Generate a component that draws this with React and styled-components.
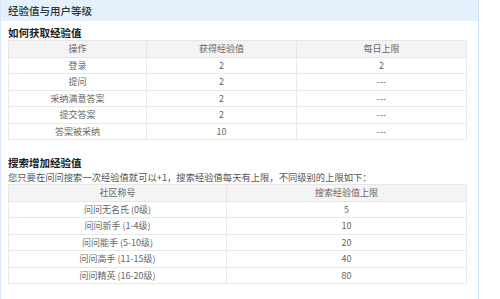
import React from 'react'
import styled, { createGlobalStyle } from 'styled-components'

const GlobalStyle = createGlobalStyle`
  html, body {
    margin: 0;
    padding: 0;
    background: #fff;
  }
  body {
    font-family: "Noto Sans CJK SC", "Noto Sans", sans-serif;
  }
`

const gainRows = [
  { action: '登录', value: '2', limit: '2' },
  { action: '提问', value: '2', limit: '---' },
  { action: '采纳满意答案', value: '2', limit: '---' },
  { action: '提交答案', value: '2', limit: '---' },
  { action: '答案被采纳', value: '10', limit: '---' },
]

const levelRows = [
  { title: '问问无名氏 (0级)', limit: '5' },
  { title: '问问新手 (1-4级)', limit: '10' },
  { title: '问问能手 (5-10级)', limit: '20' },
  { title: '问问高手 (11-15级)', limit: '40' },
  { title: '问问精英 (16-20级)', limit: '80' },
]

const App = () => {
  return (
    <>
      <GlobalStyle />
      <Panel>
        <PanelHeader>经验值与用户等级</PanelHeader>
        <PanelBody>
          <SectionTitle>如何获取经验值</SectionTitle>
          <Table>
            <colgroup>
              <col style={{ width: 138 }} />
              <col style={{ width: 150 }} />
              <col />
            </colgroup>
            <thead>
              <tr>
                <Th>操作</Th>
                <Th>获得经验值</Th>
                <Th>每日上限</Th>
              </tr>
            </thead>
            <tbody>
              {gainRows.map((r) => (
                <tr key={r.action}>
                  <Td>{r.action}</Td>
                  <Td>{r.value}</Td>
                  <Td>{r.limit}</Td>
                </tr>
              ))}
            </tbody>
          </Table>

          <SectionTitle $gap>搜索增加经验值</SectionTitle>
          <Note>您只要在问问搜索一次经验值就可以+1，搜索经验值每天有上限，不同级别的上限如下：</Note>
          <Table>
            <colgroup>
              <col style={{ width: 218 }} />
              <col />
            </colgroup>
            <thead>
              <tr>
                <Th>社区称号</Th>
                <Th>搜索经验值上限</Th>
              </tr>
            </thead>
            <tbody>
              {levelRows.map((r) => (
                <tr key={r.title}>
                  <Td>{r.title}</Td>
                  <Td>{r.limit}</Td>
                </tr>
              ))}
            </tbody>
          </Table>
        </PanelBody>
      </Panel>
    </>
  )
}

export default App

const Panel = styled.div`
  width: 477px;
  height: 299px;
  border-left: 1px solid #d6e6f8;
  border-right: 1px solid #cadff6;
  box-sizing: content-box;
  overflow: hidden;
`
const PanelHeader = styled.div`
  height: 21px;
  line-height: 21px;
  padding-left: 7px;
  background: #e4f1fd;
  color: #333;
  font-size: 10.5px;
  font-weight: 500;
`
const PanelBody = styled.div`
  padding: 5px 12px 0 7px;
`
const SectionTitle = styled.div`
  height: 14px;
  line-height: 14px;
  margin-top: ${(p) => (p.$gap ? '16px' : '0')};
  font-size: 10.5px;
  font-weight: 700;
  color: #222;
`
const Note = styled.div`
  height: 14px;
  line-height: 14px;
  font-size: 9.3px;
  color: #555;
  white-space: nowrap;
`
const Table = styled.table`
  width: 459px;
  border-collapse: collapse;
  table-layout: fixed;
  font-size: 9px;
  color: #666;
`
const Th = styled.th`
  height: 15.5px;
  padding: 0;
  background: #f4f4f4;
  border: 1px solid #e6e6e6;
  font-weight: 400;
  text-align: center;
  line-height: 15px;
`
const Td = styled.td`
  height: 15.5px;
  padding: 0;
  border: 1px solid #e9e9e9;
  text-align: center;
  line-height: 15px;
`
